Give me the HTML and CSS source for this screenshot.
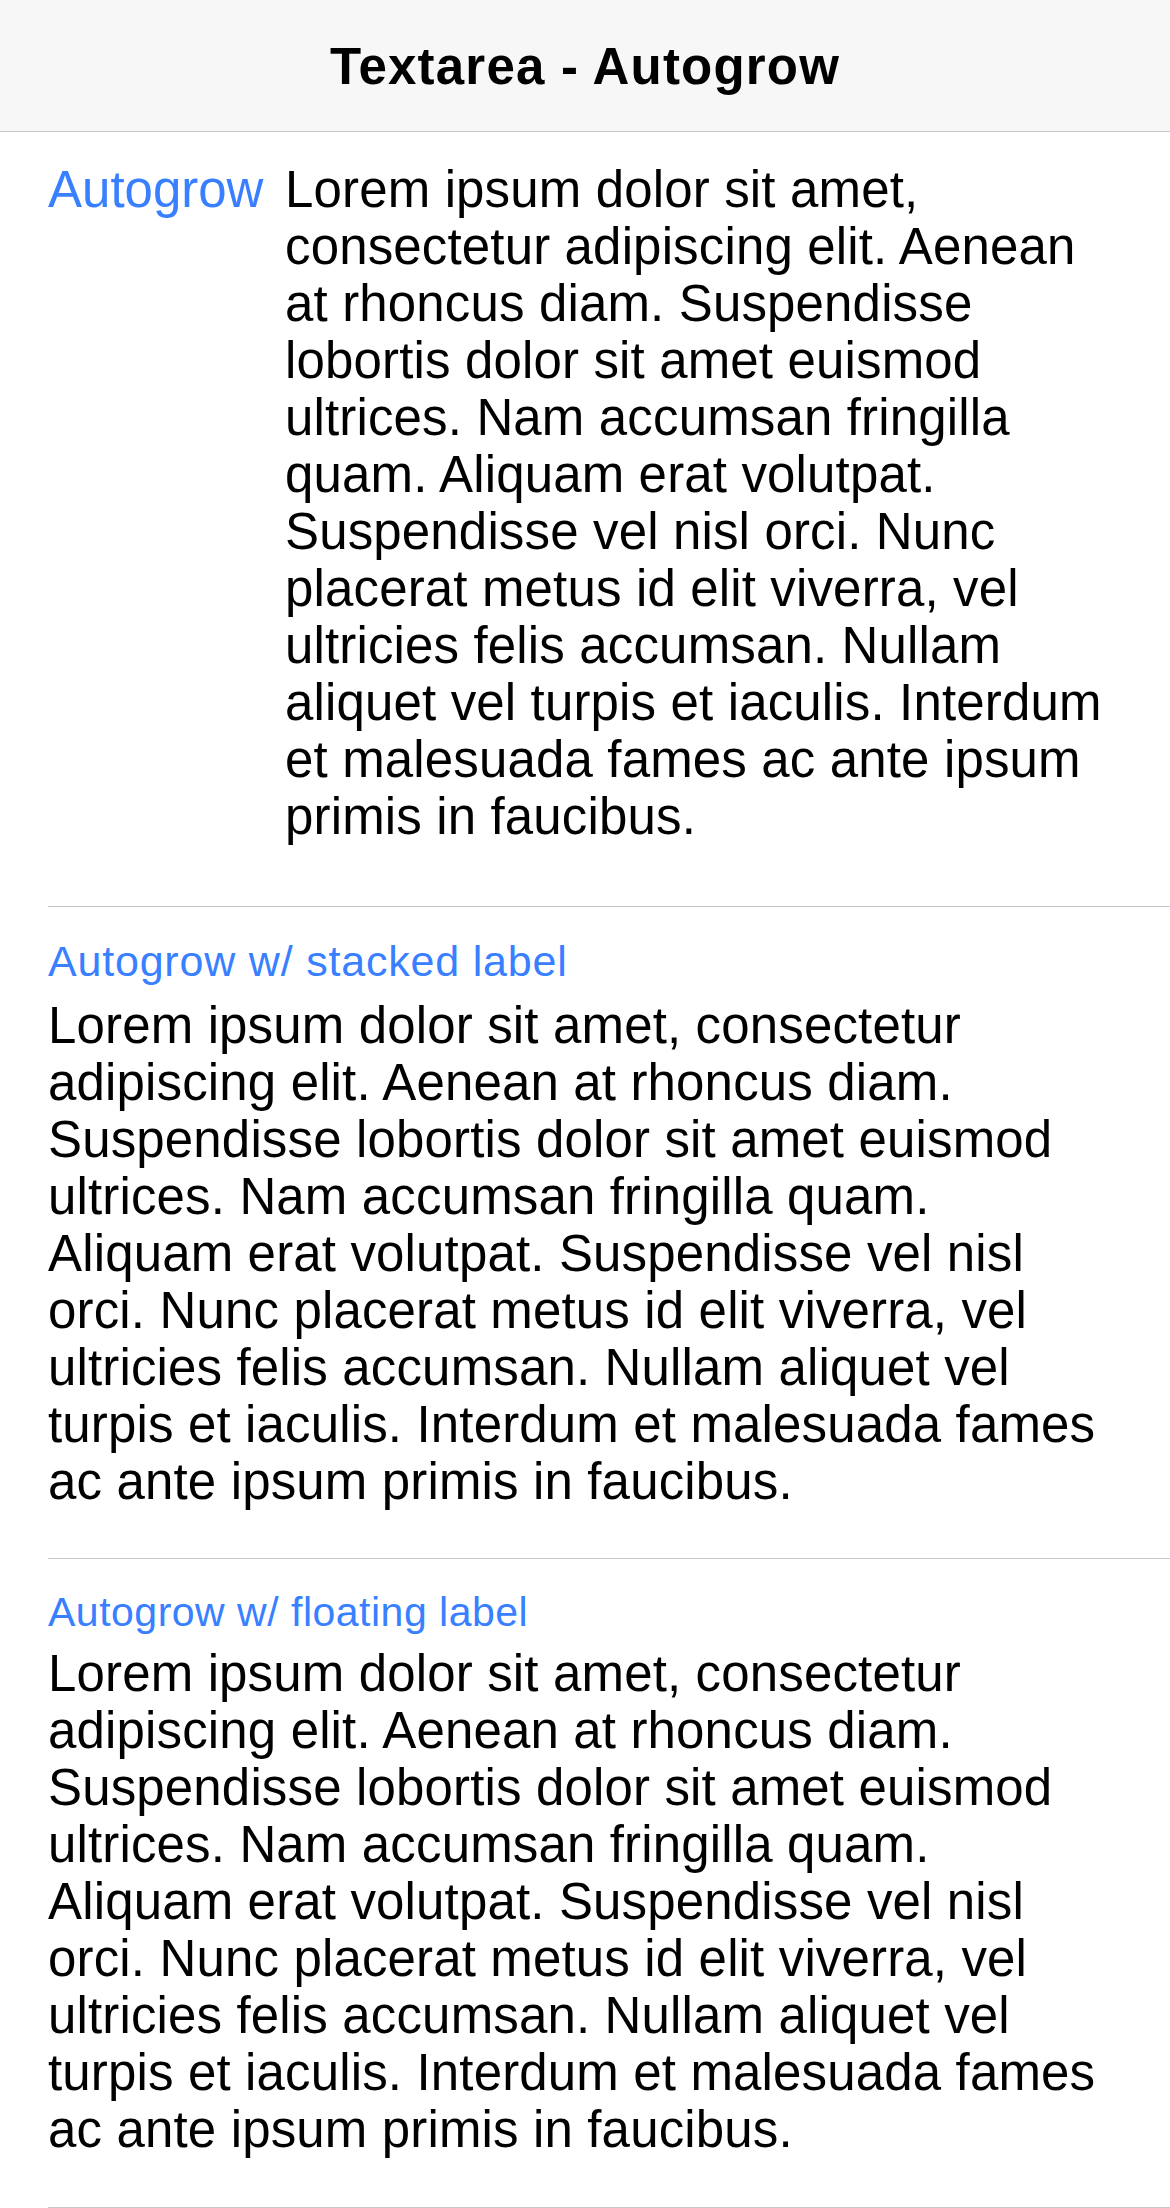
FILE: index.html
```html
<!DOCTYPE html>
<html lang="en">
<head>
<meta charset="utf-8">
<title>Textarea - Autogrow</title>
<link rel="stylesheet" href="styles.css">
</head>
<body>
<header class="toolbar">
  <h1 class="title">Textarea - Autogrow</h1>
</header>
<main class="list">
  <div class="item">
    <div class="item-inner item-inner--row">
      <label class="label label--inline" for="ta1">Autogrow</label>
      <textarea id="ta1" class="textarea textarea--inline" rows="12">Lorem ipsum dolor sit amet, consectetur adipiscing elit. Aenean at rhoncus diam. Suspendisse lobortis dolor sit amet euismod ultrices. Nam accumsan fringilla quam. Aliquam erat volutpat. Suspendisse vel nisl orci. Nunc placerat metus id elit viverra, vel ultricies felis accumsan. Nullam aliquet vel turpis et iaculis. Interdum et malesuada fames ac ante ipsum primis in faucibus.</textarea>
    </div>
  </div>
  <div class="item">
    <div class="item-inner item-inner--stacked">
      <label class="label label--stacked" for="ta2">Autogrow w/ stacked label</label>
      <textarea id="ta2" class="textarea textarea--stacked" rows="9">Lorem ipsum dolor sit amet, consectetur adipiscing elit. Aenean at rhoncus diam. Suspendisse lobortis dolor sit amet euismod ultrices. Nam accumsan fringilla quam. Aliquam erat volutpat. Suspendisse vel nisl orci. Nunc placerat metus id elit viverra, vel ultricies felis accumsan. Nullam aliquet vel turpis et iaculis. Interdum et malesuada fames ac ante ipsum primis in faucibus.</textarea>
    </div>
  </div>
  <div class="item">
    <div class="item-inner item-inner--floating">
      <label class="label label--floating" for="ta3">Autogrow w/ floating label</label>
      <textarea id="ta3" class="textarea textarea--floating" rows="9">Lorem ipsum dolor sit amet, consectetur adipiscing elit. Aenean at rhoncus diam. Suspendisse lobortis dolor sit amet euismod ultrices. Nam accumsan fringilla quam. Aliquam erat volutpat. Suspendisse vel nisl orci. Nunc placerat metus id elit viverra, vel ultricies felis accumsan. Nullam aliquet vel turpis et iaculis. Interdum et malesuada fames ac ante ipsum primis in faucibus.</textarea>
    </div>
  </div>
</main>
</body>
</html>
```
FILE: styles.css
```css
html, body {
  margin: 0;
  padding: 0;
  background: #ffffff;
}

body {
  font-family: "Liberation Sans", Arial, sans-serif;
  color: #000000;
}

.toolbar {
  background: #f7f7f7;
  border-bottom: 1px solid #c8c7cc;
  height: 131px;
  box-sizing: content-box;
}

.title {
  margin: 0;
  padding-top: 38px;
  font-size: 51px;
  line-height: 57px;
  font-weight: 700;
  letter-spacing: 1.2px;
  text-align: center;
  color: #000000;
}

.list {
  display: flex;
  flex-direction: column;
}

.item {
  padding-left: 48px;
}

.item-inner {
  border-bottom: 1px solid #c8c7cc;
  display: flex;
  flex-direction: column;
  padding-right: 66px;
}

.item-inner--row {
  flex-direction: row;
  align-items: flex-start;
  padding-top: 29px;
  padding-bottom: 61px;
  padding-right: 57px;
}

.item-inner--stacked {
  padding-top: 28px;
  padding-bottom: 48px;
}

.item-inner--floating {
  padding-top: 27px;
  padding-bottom: 49px;
}

.label {
  color: #3880ff;
  font-family: "Liberation Sans", Arial, sans-serif;
  white-space: nowrap;
}

.label--inline {
  flex: 0 0 237px;
  font-size: 51px;
  line-height: 57px;
}

.label--stacked {
  font-size: 43px;
  line-height: 52px;
  letter-spacing: 0.8px;
  margin-bottom: 10px;
}

.label--floating {
  font-size: 41px;
  line-height: 52px;
  letter-spacing: 0.5px;
  margin-bottom: 7px;
}

.textarea {
  display: block;
  margin: 0;
  padding: 0;
  border: none;
  outline: none;
  background: transparent;
  resize: none;
  overflow: hidden;
  font-family: "Liberation Sans", Arial, sans-serif;
  font-size: 51px;
  line-height: 57px;
  letter-spacing: 0.15px;
  color: #000000;
  box-sizing: content-box;
  width: 100%;
}

.textarea--inline {
  flex: 0 0 828px;
  width: 828px;
}
```
